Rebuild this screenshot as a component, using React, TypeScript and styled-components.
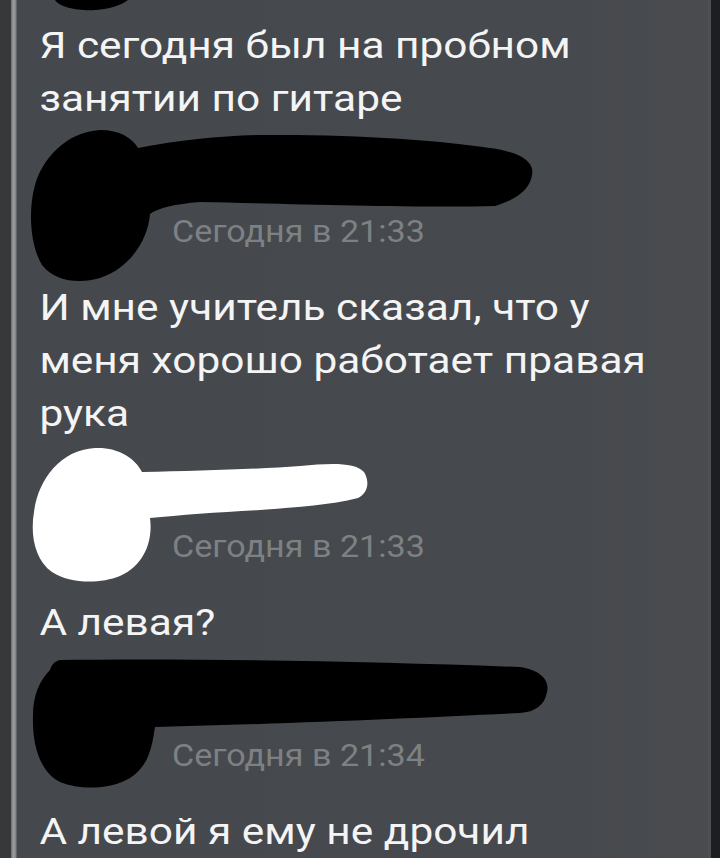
import React from "react";
import styled, { createGlobalStyle } from "styled-components";

const Global = createGlobalStyle`
  html, body { margin: 0; padding: 0; background: #46494d; }
  body { width: 720px; height: 858px; overflow: hidden; }
  #root { width: 720px; height: 858px; }
`;

const Frame = styled.div`
  display: flex;
  width: 720px;
  height: 858px;
  overflow: hidden;
  background: #46494d;
`;

const LeftGutter = styled.div`
  flex: 0 0 11px;
  background: #37383a;
`;

const Divider = styled.div`
  flex: 0 0 6px;
  background: linear-gradient(90deg, #6c6e70 0%, #9a9c9e 40%, #8c8e90 70%, #55575a 100%);
`;

const Content = styled.div`
  flex: 1;
  display: flex;
  flex-direction: column;
  background: linear-gradient(90deg, #45484c 0%, #46494d 80%, #494b4f 100%);
  overflow: hidden;
`;

const RightEdge = styled.div`
  flex: 0 0 12px;
  display: flex;
`;

const EdgeLight = styled.div`
  flex: 0 0 3px;
  background: #4e4f52;
`;

const EdgeDark = styled.div`
  flex: 1;
  background: #1d1e20;
`;

const TopRedaction = styled.svg`
  display: block;
  width: 691px;
  height: 20px;
  flex: 0 0 20px;
`;

const MessageText = styled.p`
  margin: 0;
  padding: 0 0 0 19px;
  font-family: Roboto, "Noto Sans", sans-serif;
  font-size: 36px;
  line-height: 53px;
  color: #f4f4f4;
  white-space: nowrap;
  transform: scaleX(1.178);
  transform-origin: 0 0;
`;

const Header = styled.div`
  position: relative;
  height: 156px;
  flex: 0 0 156px;
  box-sizing: border-box;
  padding: 88px 0 32px 155px;
`;

const Timestamp = styled.span`
  display: block;
  font-family: Roboto, "Noto Sans", sans-serif;
  font-size: 31px;
  line-height: 36px;
  color: #7e8184;
  white-space: nowrap;
  transform: scaleX(1.1);
  transform-origin: 0 0;
`;

const Redaction = styled.svg`
  position: absolute;
  left: 0;
  top: 0;
  width: 691px;
  height: 156px;
  overflow: visible;
`;

type Msg = {
  headerTop: number;
  time: string;
  fill: string;
  path: string;
  text: string[];
};

const messages: Msg[] = [
  {
    headerTop: 126,
    time: "Сегодня в 21:33",
    fill: "#000",
    path:
      "M 100 130 C 120 130, 132 138, 138 148 C 180 140, 220 136, 260 135 C 350 134, 440 140, 490 148 C 520 152, 535 162, 532 175 C 530 190, 515 200, 495 206 C 420 208, 300 204, 200 202 C 175 204, 158 208, 150 214 C 148 240, 130 268, 100 278 C 80 284, 55 282, 42 265 C 30 245, 28 210, 35 185 C 42 160, 65 132, 100 130 Z",
    text: ["И мне учитель сказал, что у", "меня хорошо работает правая", "рука"],
  },
  {
    headerTop: 441,
    time: "Сегодня в 21:33",
    fill: "#ffffff",
    path:
      "M 95 448 C 118 447, 135 458, 142 472 C 200 471, 260 469, 300 466 C 330 463, 355 462, 364 472 C 370 482, 368 493, 358 498 C 330 505, 300 507, 260 510 C 220 512, 180 515, 150 518 C 153 540, 145 565, 120 576 C 100 584, 70 584, 52 572 C 35 560, 30 535, 34 512 C 38 480, 60 450, 95 448 Z",
    text: ["А левая?"],
  },
  {
    headerTop: 650,
    time: "Сегодня в 21:34",
    fill: "#000",
    path:
      "M 60 660 C 200 658, 380 662, 520 667 C 540 670, 550 680, 547 692 C 545 705, 535 712, 520 713 C 420 718, 280 724, 155 727 C 152 745, 150 765, 130 778 C 110 790, 80 790, 60 782 C 40 772, 32 745, 33 715 C 33 695, 40 680, 50 670 C 52 664, 55 661, 60 660 Z",
    text: ["А левой я ему не дрочил"],
  },
];

function Lines({ lines }: { lines: string[] }) {
  return (
    <MessageText>
      {lines.map((l, i) => (
        <React.Fragment key={i}>
          {l}
          {i < lines.length - 1 && <br />}
        </React.Fragment>
      ))}
    </MessageText>
  );
}

export default function App() {
  return (
    <>
      <Global />
      <Frame>
        <LeftGutter />
        <Divider />
        <Content>
          <TopRedaction viewBox="17 0 691 20">
            <path d="M 55 0 C 60 8, 80 11, 95 10 C 110 9, 122 5, 128 0 Z" fill="#000" />
          </TopRedaction>
          <Lines lines={["Я сегодня был на пробном", "занятии по гитаре"]} />
          {messages.map((m, i) => (
            <React.Fragment key={i}>
              <Header>
                <Timestamp>{m.time}</Timestamp>
                <Redaction viewBox={`17 ${m.headerTop} 691 156`}>
                  <path d={m.path} fill={m.fill} />
                </Redaction>
              </Header>
              <Lines lines={m.text} />
            </React.Fragment>
          ))}
        </Content>
        <RightEdge>
          <EdgeLight />
          <EdgeDark />
        </RightEdge>
      </Frame>
    </>
  );
}
